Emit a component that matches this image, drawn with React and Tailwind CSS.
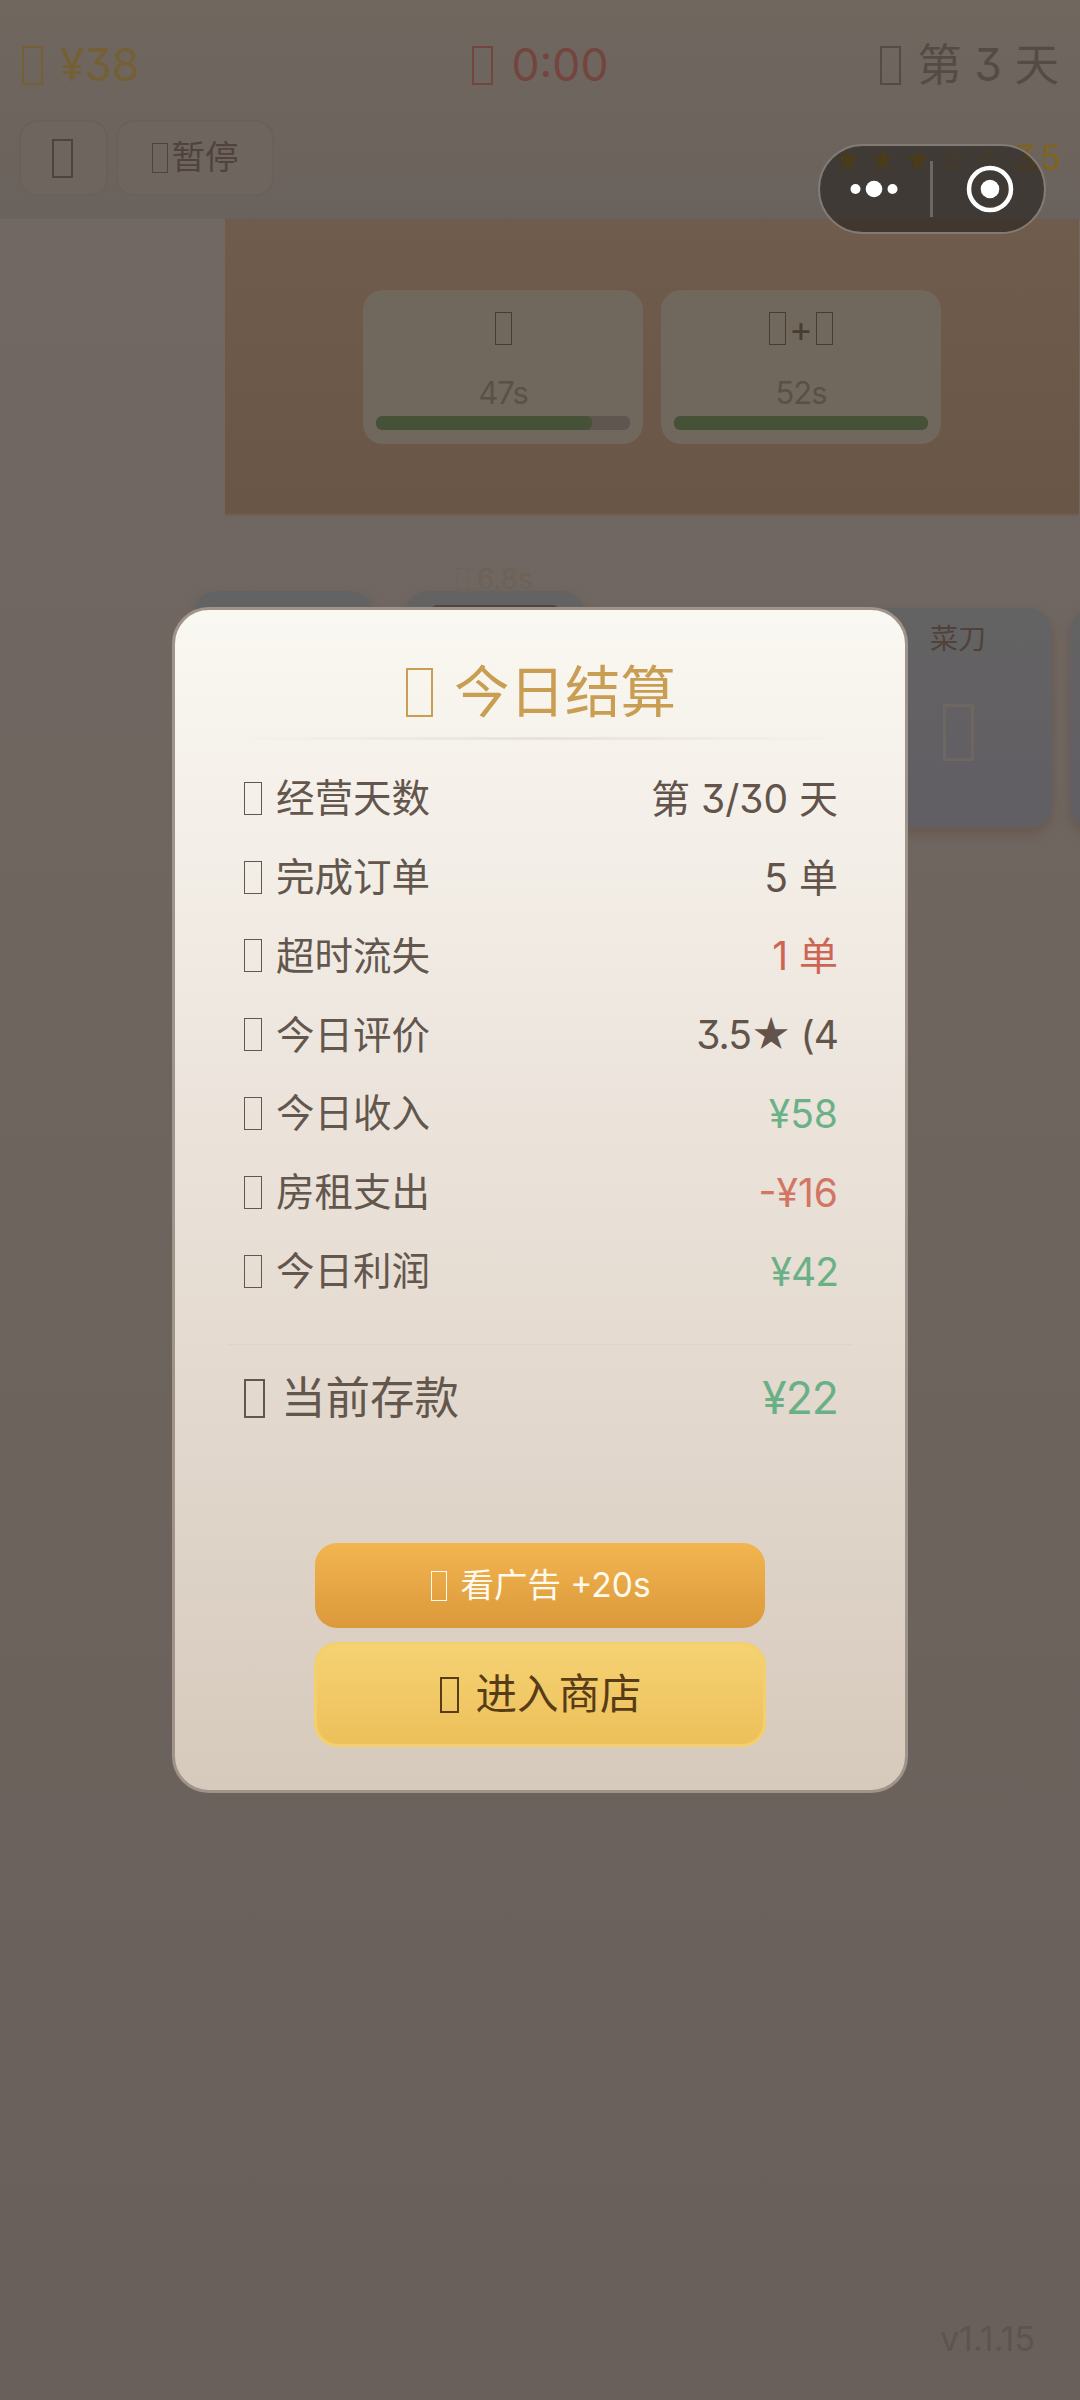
import clsx from "clsx";

const SUMMARY = [
  { label: "经营天数", value: "第 3/30 天", color: "text-[#62544a]" },
  { label: "完成订单", value: "5 单", color: "text-[#62544a]" },
  { label: "超时流失", value: "1 单", color: "text-[#cd6555]" },
  { label: "今日评价", value: "3.5★ (4", color: "text-[#62544a] tracking-[-1px]" },
  { label: "今日收入", value: "¥58", color: "text-[#6bb188]" },
  { label: "房租支出", value: "-¥16", color: "text-[#d27664]" },
  { label: "今日利润", value: "¥42", color: "text-[#6bb188] tracking-[-1px]" },
];

const ORDERS = [
  { id: 1, dishes: 1, time: "47s", progress: 85 },
  { id: 2, dishes: 2, time: "52s", progress: 100 },
];

// Empty box shown where the game font has no emoji
const Glyph = ({ className }) => (
  <span className={clsx("block shrink-0 border-current", className)} />
);

const Header = () => (
  <header className="h-[219px] bg-linear-to-b from-[#70675f] to-[#6a625c] pt-9">
    <div className="flex h-[58px] items-center justify-between pr-[21px] pl-[22px] text-[44.500px] leading-none">
      <div className="flex w-[300px] items-center gap-[17px] text-[#756036]">
        <Glyph className="h-[39px] w-[21px] border-2" />
        <span className="pt-px">¥38</span>
      </div>
      <div className="flex items-center gap-[18px] text-[#74443f]">
        <Glyph className="h-[39px] w-[21px] border-2" />
        <span className="pt-px">0:00</span>
      </div>
      <div className="flex w-[300px] items-center justify-end gap-[16px] text-[#554b45]">
        <Glyph className="h-[39px] w-[21px] border-2" />
        <span>第 3 天</span>
      </div>
    </div>

    <div className="mt-[26px] flex h-[76px] items-center justify-between pr-[21px] pl-[19px]">
      <div className="flex gap-2 text-[#50433c]">
        <div className="flex h-[76px] w-[89px] items-center justify-center rounded-[18px] border-2 border-[#6a615c] bg-[#6e655f] pr-[2px]">
          <Glyph className="h-[39px] w-[21px] border-2" />
        </div>
        <div className="flex h-[76px] w-[158px] items-center justify-center gap-1 rounded-[18px] border-2 border-[#6a615c] bg-[#6e655f] text-[33.500px] leading-none">
          <Glyph className="h-[30px] w-4 border" />
          <span>暂停</span>
        </div>
      </div>
      <div className="flex items-center gap-[4px] text-[#80641c]">
        <span className="pt-[3px] font-['DejaVu_Sans'] text-[30px] leading-none tracking-[8.400px]">
          ★★★☆☆
        </span>
        <span className="text-[34px] leading-none tracking-[-2px]">3.5</span>
      </div>
    </div>
  </header>
);

const OrderCard = ({ order }) => (
  <div className="flex h-[154px] w-[280px] flex-col items-center rounded-[20px] bg-[#70685d] px-[13px] pt-[22px]">
    <div className="flex h-[33px] items-center gap-[3px] text-[#493c31]">
      <Glyph className="h-[33px] w-[17px] border" />
      {order.dishes > 1 ? (
        <>
          <span className="text-[36px] leading-none">+</span>
          <Glyph className="h-[33px] w-[17px] border" />
        </>
      ) : null}
    </div>
    <span className="mt-[31px] text-[31px] leading-[34px] tracking-[-1px] text-[#5b5047]">
      {order.time}
    </span>
    <div className="mt-[6px] h-[14px] w-full overflow-hidden rounded-md bg-[#605650]">
      <div className="h-full rounded-md bg-[#465237]" style={{ width: `${order.progress}%` }} />
    </div>
  </div>
);

const STATION =
  "shrink-0 rounded-[22px] bg-linear-to-b from-[#646363] to-[#615e64] shadow-[0_6px_8px_1px_#695b50]";

const Kitchen = () => (
  <main className="flex-1 bg-linear-to-b from-[#716863] via-[#6d645e] to-[#6a605b]">
    <section className="mr-px ml-[225px] flex h-[297px] justify-center gap-[18px] border-b-2 border-[#71604f] bg-linear-to-b from-[#6f5c4d] to-[#695647] pt-[71px]">
      {ORDERS.map((order) => (
        <OrderCard key={order.id} order={order} />
      ))}
    </section>

    <section className="flex h-[330px] overflow-hidden pt-[75px] pl-[194px]">
      <div className={clsx(STATION, "h-[220px] w-[180px]")} />
      <div className="ml-[31px] w-[180px] shrink-0">
        <div className="-mt-6 flex h-6 items-center justify-center gap-2 text-[28px] leading-none text-[#6e6155]">
          <Glyph className="h-[22px] w-3 border" />
          <span>6.8s</span>
        </div>
        <div className={clsx(STATION, "h-[220px] px-[26px] pt-[14px]")}>
          <div className="h-3 rounded-md bg-[#4e4541]" />
        </div>
      </div>
      <div
        className={clsx(
          STATION,
          "mt-[17px] ml-[277px] flex h-[220px] w-[190px] flex-col items-center pt-4 pl-[2px] text-[#50413a]"
        )}
      >
        <span className="text-[28px] leading-[30px]">菜刀</span>
        <Glyph className="mt-[50px] h-[57px] w-[31px] border-3 text-[#6e6661]" />
      </div>
      <div className={clsx(STATION, "mt-[17px] ml-[18px] h-[220px] w-[190px]")} />
    </section>
  </main>
);

const Capsule = () => (
  <div className="absolute top-[144px] left-[818px] flex h-[90px] w-[228px] items-center rounded-full border-2 border-[#827a75] bg-[#1d1917]/55">
    <svg className="h-[86px] w-[224px]" viewBox="0 0 224 86" fill="none">
      <circle cx="35.500" cy="43" r="5" fill="#fff" />
      <circle cx="54" cy="43" r="8.300" fill="#fff" />
      <circle cx="72.500" cy="43" r="5" fill="#fff" />
      <path d="M111.500 15V71" stroke="#6c6763" strokeWidth="3" />
      <circle cx="170" cy="43" r="21" stroke="#fff" strokeWidth="4.500" />
      <circle cx="170" cy="43" r="9.300" fill="#fff" />
    </svg>
  </div>
);

const SettlementDialog = () => (
  <div className="absolute inset-0 flex items-center justify-center">
    <section className="flex h-[1186px] w-[736px] flex-col rounded-[37px] border-3 border-[#a0948a] bg-linear-to-b from-[#faf8f2] via-[#e9e0d7] to-[#d6cabc] px-[53px]">
      <h1 className="mt-[54px] flex h-[56px] items-center justify-center gap-[21px] pl-[2px] text-[55.500px] leading-none font-normal text-[#c99e53]">
        <Glyph className="h-[49px] w-[27px] border-2" />
        <span>今日结算</span>
      </h1>
      <div className="mt-[17px] h-[3px] bg-linear-to-r from-transparent via-[#e9e2d9] to-transparent" />

      <dl className="mt-[19px] pr-[14px] pl-[16px]">
        {SUMMARY.map((row) => (
          <div key={row.label} className="flex h-[78.800px] items-center justify-between leading-none">
            <dt className="flex items-center gap-[14px] text-[38.500px] text-[#62564d]">
              <Glyph className="h-[33px] w-[18px] border" />
              <span>{row.label}</span>
            </dt>
            <dd className={clsx("text-[39px]", row.color)}>{row.value}</dd>
          </div>
        ))}
      </dl>

      <div className="mt-[33px] h-px bg-[#ded5c9]" />
      <div className="mt-[22px] flex h-[64px] items-center justify-between pr-[14px] pl-[16px] text-[44.500px] leading-none">
        <div className="flex items-center gap-[16px] text-[#62564d]">
          <Glyph className="h-[39px] w-[21px] border-2" />
          <span>当前存款</span>
        </div>
        <span className="tracking-[-1px] text-[#69b087]">¥22</span>
      </div>

      <div className="mt-[112px] flex flex-col items-center gap-[14px] leading-none">
        <button className="flex h-[85px] w-[450px] items-center justify-center gap-[13px] rounded-[22px] bg-linear-to-b from-[#f2b54f] to-[#db993b] pt-px pl-[2px] text-[33.500px] text-[#fffaf0]">
          <Glyph className="h-[30px] w-[16px] border" />
          <span>看广告 +20s</span>
        </button>
        <button className="flex h-[105px] w-[452px] items-center justify-center gap-[16px] rounded-[24px] border-3 border-[#f4cf6b] bg-linear-to-b from-[#f6d273] to-[#ecc05a] pt-[2px] pl-[2px] text-[41.500px] text-[#573c17]">
          <Glyph className="h-[36px] w-[19px] border-2" />
          <span>进入商店</span>
        </button>
      </div>
    </section>
  </div>
);

export default function App() {
  return (
    <div className="relative flex h-[2400px] w-[1080px] flex-col overflow-hidden bg-[#6a605b] font-['Inter','Noto_Sans_CJK_SC',sans-serif] [font-feature-settings:'cv09']">
      <Header />
      <Kitchen />
      <footer className="flex h-[84px] justify-end bg-[#6a605b] pr-[45px] text-[34px] leading-[46px] text-[#5d544e]">
        v1.1.15
      </footer>
      <SettlementDialog />
      <Capsule />
    </div>
  );
}
